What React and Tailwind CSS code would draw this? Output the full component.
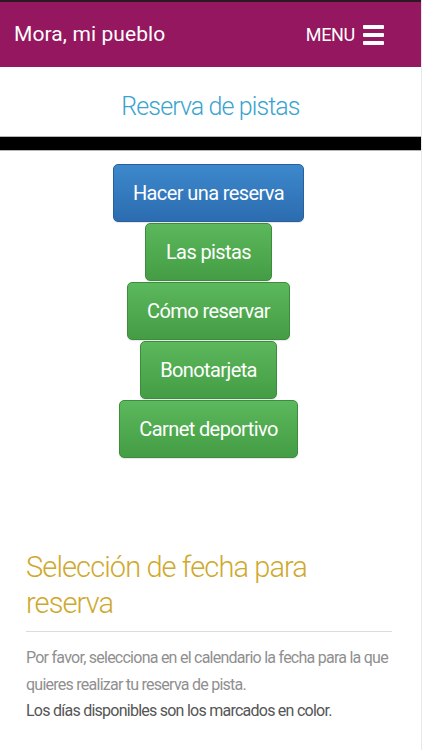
import { useState } from "react";

const buttons = [
  { label: "Hacer una reserva", w: "w-[191px]", blue: true },
  { label: "Las pistas", w: "w-[127px]" },
  { label: "Cómo reservar", w: "w-[163px]" },
  { label: "Bonotarjeta", w: "w-[137px]" },
  { label: "Carnet deportivo", w: "w-[179px]" },
];

export default function App() {
  const [open, setOpen] = useState(false);

  return (
    <div className="min-h-[750px] bg-white font-['Roboto',sans-serif] border-r border-gray-200">
      {/* Header */}
      <header className="h-[67px] border-t-2 border-[#2b1822] bg-[#94175f] flex items-center justify-between pl-[14px] pr-[37px]">
        <span className="text-white text-[21px] tracking-[0.1px]">Mora, mi pueblo</span>
        <button onClick={() => setOpen(!open)} className="flex items-center gap-[8px] text-white">
          <span className="text-[18px] tracking-[-0.3px]">MENU</span>
          <span className="flex flex-col gap-[4px]">
            <span className="block w-[21px] h-[4px] bg-white rounded-[1px]" />
            <span className="block w-[21px] h-[4px] bg-white rounded-[1px]" />
            <span className="block w-[21px] h-[4px] bg-white rounded-[1px]" />
          </span>
        </button>
      </header>

      {/* Page title */}
      <div className="h-[69px] flex items-center justify-center pt-[10px]">
        <h1 className="text-[#39a4d0] text-[25px] font-light tracking-[-0.9px]">Reserva de pistas</h1>
      </div>
      <div className="h-[15px] bg-black border-y border-[#b5b5b5]" />

      {/* Buttons */}
      <nav className="flex flex-col items-center gap-[1px] pt-[13px] pr-[4px]">
        {buttons.map(b => (
          <a
            key={b.label}
            href="#"
            className={`${b.w} h-[58px] flex items-center justify-center rounded-[5px] border text-white text-[20px] tracking-[-0.6px] shadow-[0_1px_1px_rgba(0,0,0,0.1)] ${
              b.blue
                ? "bg-gradient-to-b from-[#3d88cc] to-[#2c6cb0] border-[#2a5f99]"
                : "bg-gradient-to-b from-[#5cb85c] to-[#449d44] border-[#3d8b3d]"
            }`}
          >
            {b.label}
          </a>
        ))}
      </nav>

      {/* Date selection */}
      <section className="pl-[26px] pt-[91px] pr-[29px]">
        <h2 className="text-[#cfa92e] text-[29px] font-light leading-[36px] tracking-[-0.9px]">
          Selección de fecha para reserva
        </h2>
        <hr className="mt-[10px] border-t border-[#dcdcdc]" />
        <p className="mt-[13px] text-[16px] leading-[26.5px] text-[#8f8f8f] tracking-[-0.75px]">
          Por favor, selecciona en el calendario la fecha para la que quieres realizar tu reserva de pista.
          <br />
          <span className="text-[#555555]">Los días disponibles son los marcados en color.</span>
        </p>
      </section>
    </div>
  );
}
